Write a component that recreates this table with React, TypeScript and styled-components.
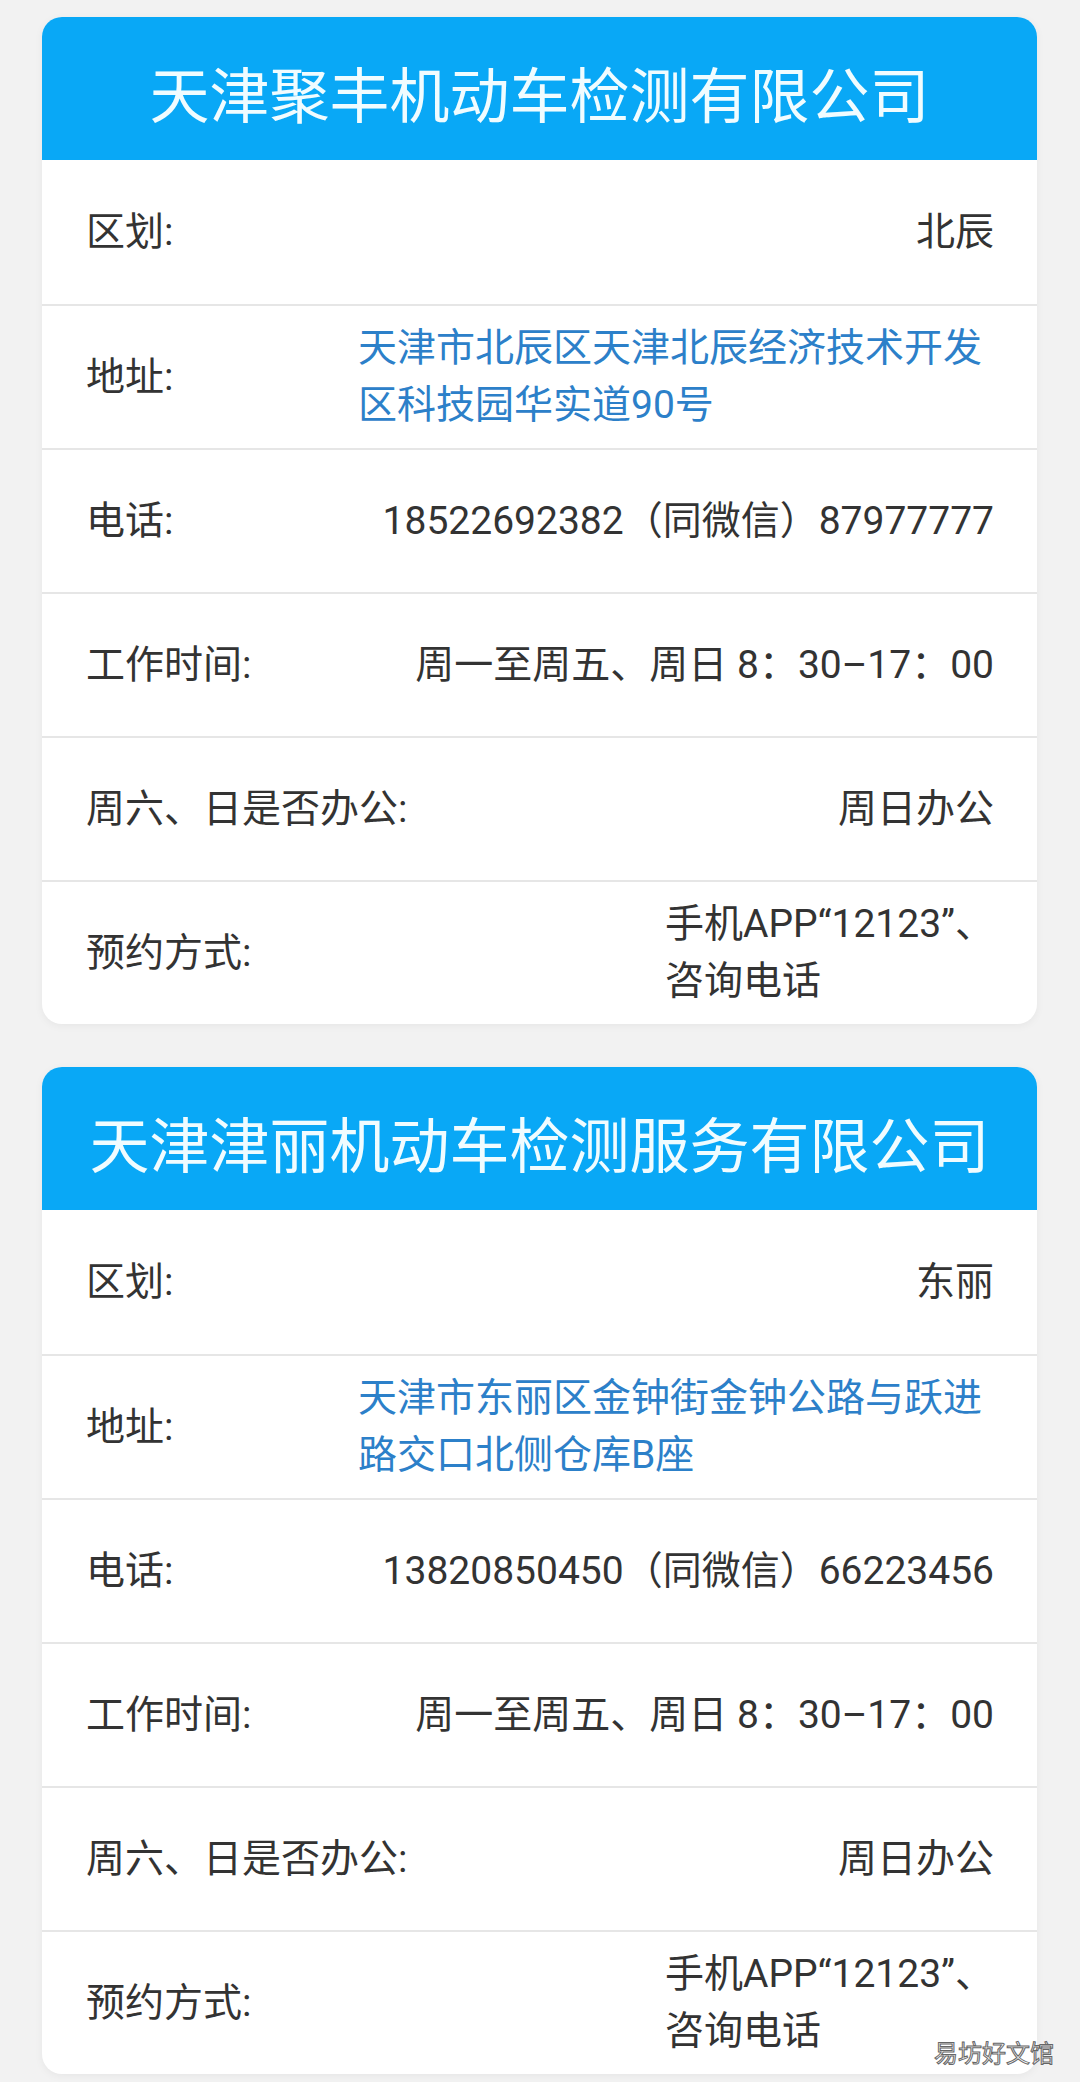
import React from 'react';
import styled, { createGlobalStyle } from 'styled-components';

const GlobalStyle = createGlobalStyle`
  html, body {
    margin: 0;
    padding: 0;
    background: #f2f2f2;
  }
  body {
    font-family: Roboto, "Noto Sans CJK SC", sans-serif;
    color: #333333;
  }
`;

const Page = styled.div`
  position: relative;
  display: flex;
  flex-direction: column;
  gap: 43px;
  padding: 17px 43px 8px 42px;
  width: 1080px;
  box-sizing: border-box;
`;

const Card = styled.section`
  background: #ffffff;
  border-radius: 20px;
  overflow: hidden;
  box-shadow: 0 2px 8px rgba(0, 0, 0, 0.05);
`;

const Header = styled.div`
  height: 143px;
  background: #09a8f6;
  display: flex;
  align-items: center;
  justify-content: center;
  padding-top: 6px;
  box-sizing: border-box;
`;

const Title = styled.h2`
  margin: 0;
  font-family: "Noto Sans CJK SC", sans-serif;
  font-weight: 400;
  font-size: 60px;
  line-height: 1;
  color: #f0fcff;
  white-space: nowrap;
`;

const Row = styled.div`
  height: 144px;
  box-sizing: border-box;
  display: flex;
  align-items: center;
  justify-content: space-between;
  padding: 0 43px 0 44px;
  & + & {
    border-top: 2px solid #e6e6e6;
  }
`;

const Label = styled.div`
  font-size: 39px;
  line-height: 57px;
  color: #333333;
  white-space: nowrap;
`;

const Value = styled.div<{ $link?: boolean }>`
  max-width: 636px;
  font-size: 39px;
  line-height: 57px;
  text-align: left;
  color: ${({ $link }) => ($link ? '#2c80c9' : '#333333')};
`;

const Line = styled.span`
  display: block;
  white-space: nowrap;
`;

const Watermark = styled.div`
  position: absolute;
  right: 26px;
  bottom: 18px;
  font-family: "Noto Sans CJK SC", sans-serif;
  font-size: 24px;
  line-height: 1;
  color: #f4f4f4;
  -webkit-text-stroke: 1px #666666;
`;

type Item = { label: string; value: string | string[]; link?: boolean };

const companies: { name: string; items: Item[] }[] = [
  {
    name: '天津聚丰机动车检测有限公司',
    items: [
      { label: '区划:', value: '北辰' },
      { label: '地址:', value: '天津市北辰区天津北辰经济技术开发区科技园华实道90号', link: true },
      { label: '电话:', value: '18522692382（同微信）87977777' },
      { label: '工作时间:', value: '周一至周五、周日 8：30–17：00' },
      { label: '周六、日是否办公:', value: '周日办公' },
      { label: '预约方式:', value: ['手机APP“12123”、', '咨询电话'] },
    ],
  },
  {
    name: '天津津丽机动车检测服务有限公司',
    items: [
      { label: '区划:', value: '东丽' },
      { label: '地址:', value: '天津市东丽区金钟街金钟公路与跃进路交口北侧仓库B座', link: true },
      { label: '电话:', value: '13820850450（同微信）66223456' },
      { label: '工作时间:', value: '周一至周五、周日 8：30–17：00' },
      { label: '周六、日是否办公:', value: '周日办公' },
      { label: '预约方式:', value: ['手机APP“12123”、', '咨询电话'] },
    ],
  },
];

const App: React.FC = () => (
  <>
    <GlobalStyle />
    <Page>
      {companies.map((company) => (
        <Card key={company.name}>
          <Header>
            <Title>{company.name}</Title>
          </Header>
          {company.items.map((item) => (
            <Row key={item.label}>
              <Label>{item.label}</Label>
              <Value $link={item.link}>
                {Array.isArray(item.value)
                  ? item.value.map((line) => <Line key={line}>{line}</Line>)
                  : item.value}
              </Value>
            </Row>
          ))}
        </Card>
      ))}
      <Watermark>易坊好文馆</Watermark>
    </Page>
  </>
);

export default App;
